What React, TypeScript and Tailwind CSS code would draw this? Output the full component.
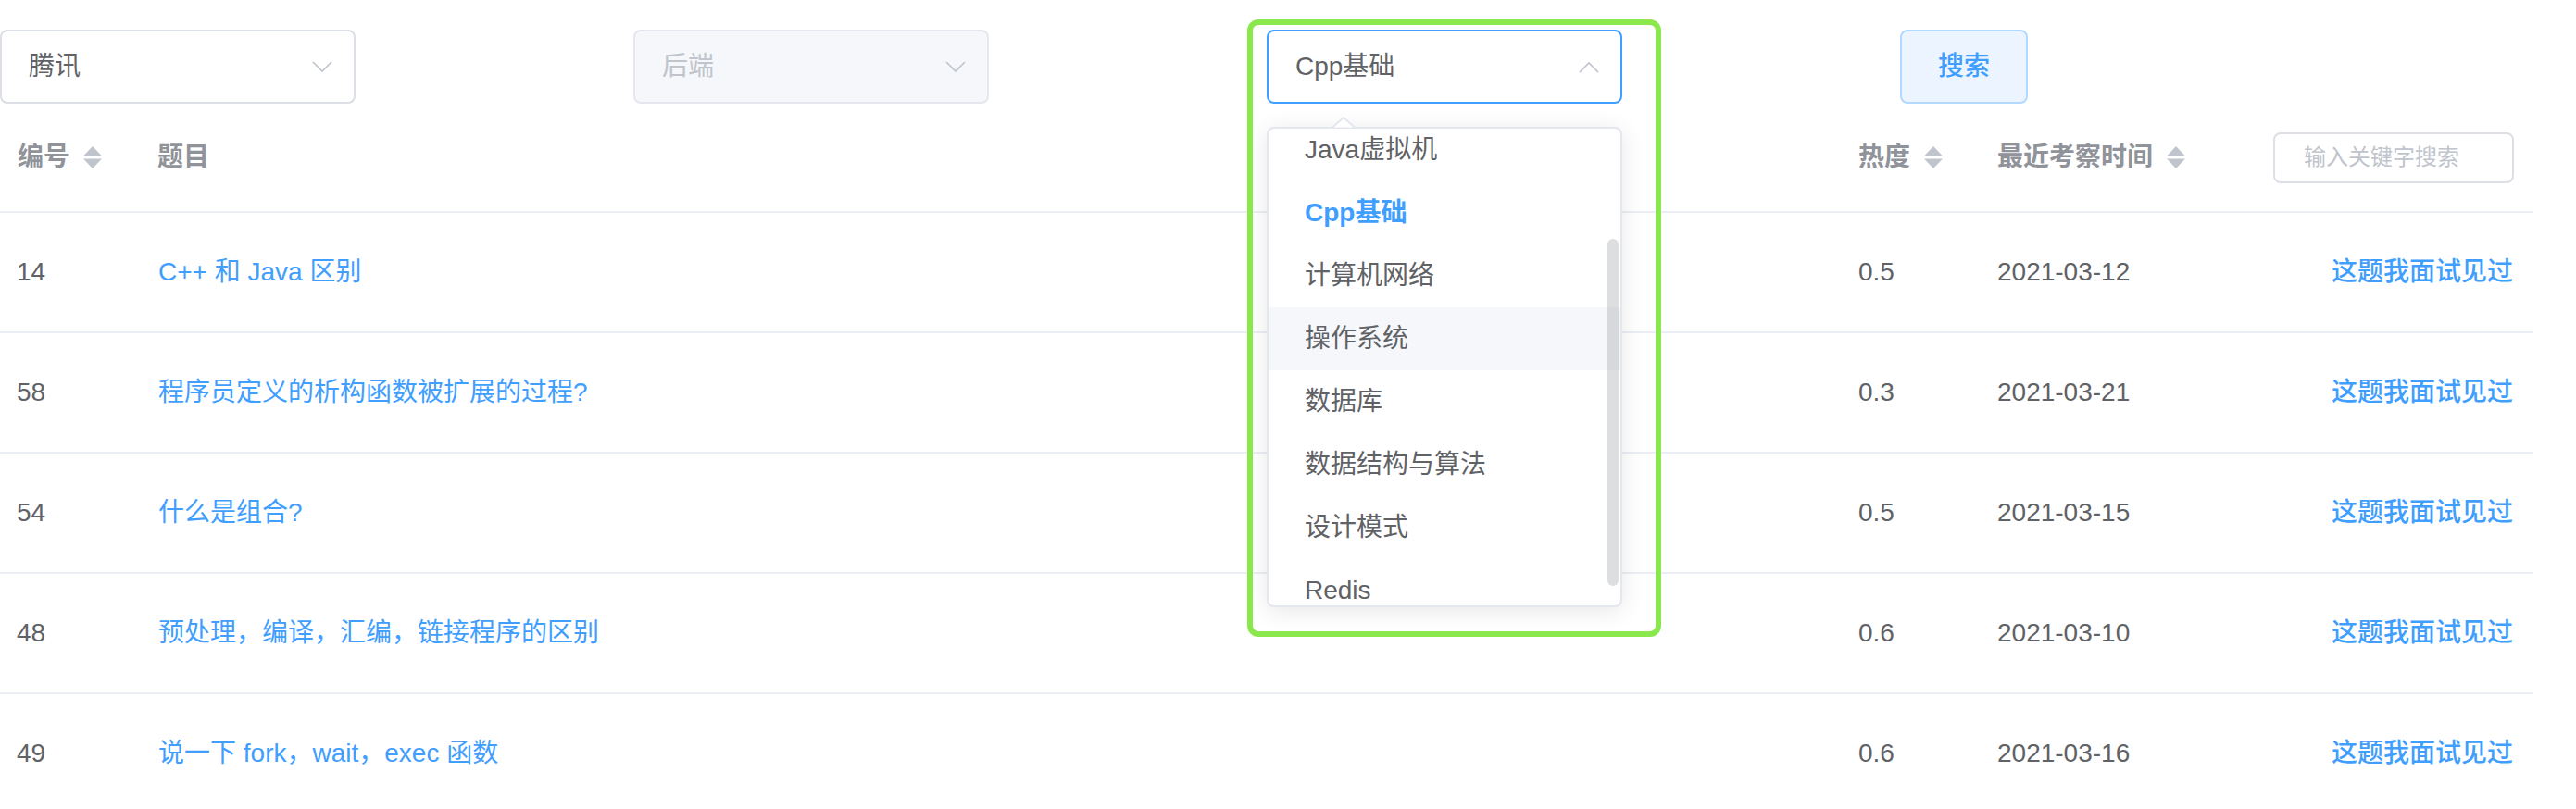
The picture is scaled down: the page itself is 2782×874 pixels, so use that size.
import React from "react";

const rows = [
  { id: "14", title: "C++ 和 Java 区别", heat: "0.5", date: "2021-03-12" },
  { id: "58", title: "程序员定义的析构函数被扩展的过程?", heat: "0.3", date: "2021-03-21" },
  { id: "54", title: "什么是组合?", heat: "0.5", date: "2021-03-15" },
  { id: "48", title: "预处理，编译，汇编，链接程序的区别", heat: "0.6", date: "2021-03-10" },
  { id: "49", title: "说一下 fork，wait，exec 函数", heat: "0.6", date: "2021-03-16" },
];

const options = [
  "Java虚拟机",
  "Cpp基础",
  "计算机网络",
  "操作系统",
  "数据库",
  "数据结构与算法",
  "设计模式",
  "Redis",
];

function SortIcon() {
  return (
    <svg width="20" height="24" viewBox="0 0 20 24" className="ml-[15px] shrink-0">
      <polygon points="10,0 20,10.5 0,10.5" fill="#c0c4cc" />
      <polygon points="0,13.5 20,13.5 10,24" fill="#c0c4cc" />
    </svg>
  );
}

function Chevron({ up }: { up?: boolean }) {
  return (
    <svg width="22" height="13" viewBox="0 0 22 13" className="shrink-0">
      <polyline
        points={up ? "1,12 11,2 21,12" : "1,1 11,11 21,1"}
        fill="none"
        stroke="#c0c4cc"
        strokeWidth="1.7"
      />
    </svg>
  );
}

function Select({
  value,
  disabled,
  focused,
}: {
  value: string;
  disabled?: boolean;
  focused?: boolean;
}) {
  const base =
    "w-[384px] h-[80px] rounded-[8px] border-2 flex items-center justify-between pl-[29px] pr-[23px] text-[28px]";
  const cls = disabled
    ? "border-[#e4e7ed] bg-[#f5f7fa] text-[#c0c4cc]"
    : focused
    ? "border-[#409eff] bg-white text-[#606266]"
    : "border-[#dcdfe6] bg-white text-[#606266]";
  return (
    <div className={`${base} ${cls}`}>
      <span>{value}</span>
      <Chevron up={focused} />
    </div>
  );
}

function Dropdown() {
  return (
    <>
      <svg
        width="28"
        height="13"
        viewBox="0 0 28 13"
        className="absolute left-[69px] top-[94px] z-30"
      >
        <polygon points="1,12.5 14,1 27,12.5" fill="white" stroke="#e4e7ed" strokeWidth="2" />
      </svg>
      <div className="absolute left-0 top-[105px] z-20 w-[384px] h-[519px] rounded-[8px] border-2 border-[#e4e7ed] bg-white shadow-[0_4px_24px_rgba(0,0,0,0.1)] overflow-hidden">
        <div className="-mt-[11px]">
          {options.map((o) => {
            const selected = o === "Cpp基础";
            const hover = o === "操作系统";
            return (
              <div
                key={o}
                className={`h-[68px] flex items-center pl-[39px] text-[28px] ${
                  selected ? "text-[#409eff] font-bold" : "text-[#606266]"
                } ${hover ? "bg-[#f5f7fa]" : ""}`}
              >
                {o}
              </div>
            );
          })}
        </div>
        <div className="absolute right-[2px] top-[119px] w-[12px] h-[375px] rounded-full bg-[rgba(144,147,153,0.3)]" />
      </div>
      <svg width="0" height="0" className="hidden" />
    </>
  );
}

export default function App() {
  return (
    <div className="relative w-[2782px] h-[874px] overflow-hidden bg-white font-['Liberation_Sans','Noto_Sans_CJK_SC',sans-serif] leading-none">
      <div className="w-[2736px]">
        {/* filter bar */}
        <div className="grid grid-cols-4 pt-[32px]">
          <div>
            <Select value="腾讯" />
          </div>
          <div>
            <Select value="后端" disabled />
          </div>
          <div className="relative">
            <Select value="Cpp基础" focused />
            <Dropdown />
            <div className="pointer-events-none absolute left-[-21px] top-[-11px] z-40 w-[447px] h-[667px] rounded-[12px] border-[6px] border-[#8ae84c]" />
          </div>
          <div>
            <button className="w-[138px] h-[80px] rounded-[8px] border-2 border-[#b3d8ff] bg-[#ecf5ff] text-[#409eff] text-[28px] font-medium">
              搜索
            </button>
          </div>
        </div>

        {/* table header */}
        <div className="grid grid-cols-[150px_1837px_150px_263px_336px] h-[118px] border-b-2 border-[#ebeef5] text-[28px] font-bold text-[#909399]">
          <div className="flex items-center pl-[19px]">
            <span>编号</span>
            <SortIcon />
          </div>
          <div className="flex items-center pl-[20px]">
            <span>题目</span>
          </div>
          <div className="flex items-center pl-[20px]">
            <span>热度</span>
            <SortIcon />
          </div>
          <div className="flex items-center pl-[20px]">
            <span>最近考察时间</span>
            <SortIcon />
          </div>
          <div className="flex items-center justify-end pr-[21px]">
            <div className="w-[260px] h-[55px] rounded-[8px] border-2 border-[#dcdfe6] flex items-center pl-[31px] text-[24px] font-normal text-[#c0c4cc]">
              输入关键字搜索
            </div>
          </div>
        </div>

        {/* rows */}
        {rows.map((r) => (
          <div
            key={r.id}
            className="grid grid-cols-[150px_1837px_150px_263px_336px] h-[130px] border-b-2 border-[#ebeef5] text-[28px] text-[#606266]"
          >
            <div className="flex items-center pl-[18px]">{r.id}</div>
            <div className="flex items-center pl-[21px] text-[#409eff]">{r.title}</div>
            <div className="flex items-center pl-[20px]">{r.heat}</div>
            <div className="flex items-center pl-[20px]">{r.date}</div>
            <div className="flex items-center justify-end pr-[22px] text-[#409eff] font-medium">
              这题我面试见过
            </div>
          </div>
        ))}
      </div>
    </div>
  );
}
